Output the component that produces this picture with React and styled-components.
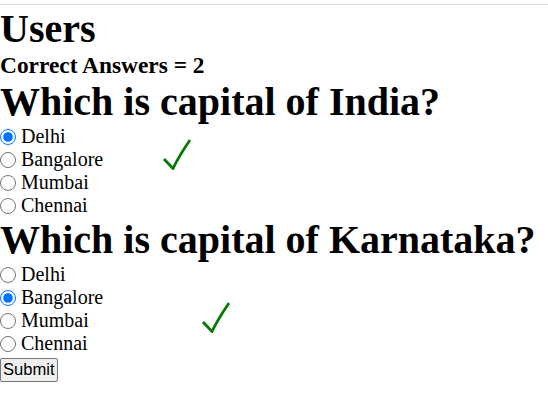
import React from "react";
import styled, { createGlobalStyle } from "styled-components";

const Global = createGlobalStyle`
  html, body { margin: 0; padding: 0; background: #fff; }
  body { font-family: "Liberation Serif", "Times New Roman", serif; color: #000; }
`;

const Page = styled.div`
  padding-top: 4px;
`;

const TopRule = styled.div`
  border-top: 1px solid #dcdcdc;
  margin-bottom: 1px;
`;

const Title = styled.h1`
  margin: 0;
  font-size: 40px;
  font-weight: bold;
  line-height: 46px;
`;

const Score = styled.h3`
  margin: 0;
  font-size: 23.4px;
  font-weight: bold;
  line-height: 27px;
`;

const Question = styled.section`
  position: relative;
`;

const Options = styled.div`
  display: flex;
  flex-direction: column;
`;

const Option = styled.label`
  display: flex;
  align-items: center;
  height: 23px;
  font-size: 20px;
  line-height: 23px;
`;

const Radio = styled.input.attrs({ type: "radio" })`
  width: 16px;
  height: 16px;
  margin: 0 5px 0 0;
  flex: none;
`;

const Check = styled.svg`
  position: absolute;
  width: 30px;
  height: 32px;
`;

const Submit = styled.button`
  font-family: "Liberation Sans", Arial, sans-serif;
  font-size: 16.6px;
  padding: 1px 2px;
  border: 1px solid #767676;
  border-radius: 2px;
  background: #efefef;
  color: #000;
  margin-top: 3px;
`;

const questions = [
  {
    q: "Which is capital of India?",
    name: "q1",
    selected: "Delhi",
    check: { left: 161, top: 13 },
  },
  {
    q: "Which is capital of Karnataka?",
    name: "q2",
    selected: "Bangalore",
    check: { left: 200, top: 38 },
  },
];

const options = ["Delhi", "Bangalore", "Mumbai", "Chennai"];

function Tick({ pos }) {
  return (
    <Check
      viewBox="0 0 30 32"
      style={{ left: pos.left, top: pos.top + 46 }}
      aria-hidden="true"
    >
      <path
        d="M3 21 L12 30.5 Q18 18 29 2"
        fill="none"
        stroke="#047a04"
        strokeWidth="2.8"
        strokeLinejoin="miter"
      />
    </Check>
  );
}

export default function App() {
  return (
    <Page>
      <Global />
      <TopRule />
      <Title>Users</Title>
      <Score>Correct Answers = 2</Score>
      {questions.map((item) => (
        <Question key={item.name}>
          <Title>{item.q}</Title>
          <Options>
            {options.map((o) => (
              <Option key={o}>
                <Radio name={item.name} defaultChecked={o === item.selected} />
                {o}
              </Option>
            ))}
          </Options>
          <Tick pos={item.check} />
        </Question>
      ))}
      <Submit>Submit</Submit>
    </Page>
  );
}
